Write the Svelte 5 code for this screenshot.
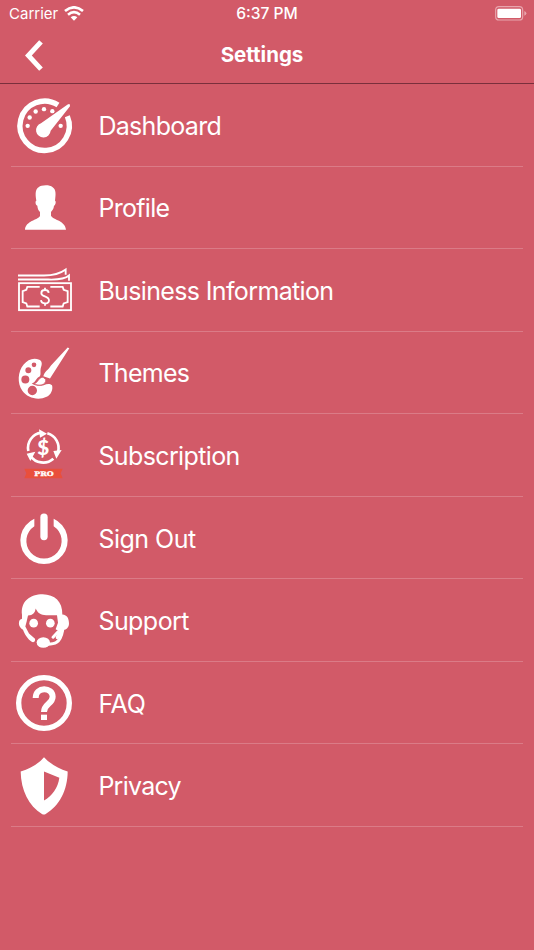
<script lang="ts">
  type Item = { id: string; label: string; top: number; spacing: number };

  // top: vertical start of each icon's viewBox, in icon units (3 per px)
  const items: Item[] = [
    { id: 'dashboard', label: 'Dashboard', top: -16.5, spacing: -0.7 },
    { id: 'profile', label: 'Profile', top: -9, spacing: -0.7 },
    { id: 'business', label: 'Business Information', top: -16.5, spacing: -0.64 },
    { id: 'themes', label: 'Themes', top: -8.5, spacing: -0.7 },
    { id: 'subscription', label: 'Subscription', top: -10, spacing: -0.62 },
    { id: 'signout', label: 'Sign Out', top: -8.5, spacing: -0.5 },
    { id: 'support', label: 'Support', top: -9.5, spacing: -0.55 },
    { id: 'faq', label: 'FAQ', top: -9, spacing: -0.3 },
    { id: 'privacy', label: 'Privacy', top: -9.5, spacing: -0.75 },
  ];
</script>

<div class="screen">
  <header>
    <div class="status">
      <div class="status__left">
        <span class="carrier">Carrier</span>
        <svg class="wifi" viewBox="0 0 60 45" fill="none" stroke="#fff" stroke-width="8">
          <path d="M3 15Q30 -7 57 15" />
          <path d="M12 26Q30 11 48 26" />
          <path d="M30 44L20 34Q30 26 40 34Z" fill="#fff" stroke="none" />
        </svg>
      </div>
      <span class="time">6:37 PM</span>
      <svg class="battery" viewBox="0 0 96 45">
        <rect x="2" y="2" width="81" height="40" rx="10" fill="none" stroke="#e8a5ad" stroke-width="3.5" />
        <rect x="7" y="8" width="71" height="28" rx="4" fill="#fff" />
        <path d="M88 15Q94 17 94 22T88 29Z" fill="#e8a5ad" />
      </svg>
    </div>
    <div class="nav">
      <button class="back" aria-label="Back">
        <svg viewBox="0 0 54 92" fill="none" stroke="#fff" stroke-width="15">
          <path d="M48 5L10 46L48 87" />
        </svg>
      </button>
      <h1>Settings</h1>
    </div>
  </header>

  <ul>
    {#each items as item (item.id)}
      <li>
        <svg class="icon" viewBox={`0 ${item.top} 270 247.65`} fill="#fff">
          {#if item.id === 'dashboard'}
            <path d="M174 43.7A74 74 0 1 0 202 77" fill="none" stroke="#fff" stroke-width="16" />
            <path d="M203 42Q211 38 210 47L152 121A22 22 0 1 1 123 98Z" />
            <circle cx="83" cy="106" r="6.5" />
            <circle cx="89" cy="81" r="6.5" />
            <circle cx="107" cy="63" r="6.5" />
            <circle cx="132" cy="56" r="6.5" />
            <circle cx="157" cy="62" r="6.5" />
            <circle cx="182" cy="106" r="6.5" />
          {:else if item.id === 'profile'}
            <path d="M109 92C105 68 107 57 117 51C121 46 148 42 158 52C168 59 168 71 165 92C169 93 167 106 162 107C161 117 157 121 153 126V137C160 151 195 150 198 179H75C77 152 113 151 120 138V126C115 121 113 116 112 107C106 105 105 93 109 92Z" />
          {:else if item.id === 'business'}
            <g fill="none" stroke="#fff" stroke-width="5.5">
              <rect x="57" y="83" width="156" height="81" />
              <path d="M54 72H145C177 73 196 70 207 60V76" />
              <path d="M54 60H132C164 60 181 54 197 42V58" />
              <path d="M119 94H82L79 103L68 107V140L79 144L82 153H119M151 94H188L191 103L203 107V140L191 144L188 153H151" />
              <path d="M146 112C145 100 124 101 124 113C124 125 147 120 147 135C147 147 124 147 123 134M135 97V104M135 142V151" />
            </g>
          {:else if item.id === 'themes'}
            <path fill-rule="evenodd" d="M118 75C100 67 83 75 71 89C53 110 51 145 67 168C82 190 115 198 140 186C153 180 160 163 156 151C149 145 140 147 131 151C120 155 105 153 95 146C107 144 109 128 118 126C125 119 119 110 123 97C127 88 126 78 118 75ZM102 83A7 7 0 1 0 102 97A7 7 0 1 0 102 83ZM85 97A9 9 0 1 0 85 115A9 9 0 1 0 85 97ZM76 122A12 12 0 1 0 76 146A12 12 0 1 0 76 122ZM97 153A14 14 0 1 0 97 181A14 14 0 1 0 97 153Z" />
            <path d="M203 38L208 40L150 131L130 124C133 111 145 105 153 92Z" />
            <path d="M129 127L137 134C139 151 116 155 102 146C116 144 113 129 129 127Z" stroke="#d25a68" stroke-width="2" />
          {:else if item.id === 'subscription'}
            <g fill="none" stroke="#fff" stroke-width="8">
              <path d="M85 98A46 46 0 0 1 124 43" />
              <path d="M142 45A46 46 0 0 1 174 102" />
              <path d="M160 121A46 46 0 0 1 91 112" />
            </g>
            <path d="M117 33L141 46L120 58ZM160 98L185 95L169 121ZM80 106L106 100L91 128Z" />
            <text class="dollar" x="130" y="110" text-anchor="middle">$</text>
            <path d="M73 151H188L182 165L188 180H73L79 165Z" fill="#e94f3c" />
            <text class="pro" x="132" y="172" text-anchor="middle" textLength="58" lengthAdjust="spacingAndGlyphs">PRO</text>
          {:else if item.id === 'signout'}
            <path d="M103 57A71 71 0 1 0 161 57V79A53 53 0 1 1 103 79Z" />
            <path d="M132 52V110" stroke="#fff" stroke-width="22" stroke-linecap="round" />
          {:else if item.id === 'support'}
            <path d="M66 95C61 54 91 33 128 33C164 34 188 54 187 94C202 95 207 107 207 121C207 134 198 139 191 141C186 154 181 163 173 168Q165 168 168 160L176 144L167 138L174 119L171 96H142C124 97 114 91 107 76C105 89 99 96 84 97L80 115L76 130L87 151L105 167C107 175 101 180 94 175C84 169 74 154 69 140C56 133 54 118 60 110L66 107Z" />
            <circle cx="101" cy="120" r="13" />
            <circle cx="151" cy="120" r="13" />
            <ellipse cx="130" cy="178" rx="20" ry="16" />
            <path d="M138 183C163 184 181 181 188 141M159 162L173 147" fill="none" stroke="#fff" stroke-width="9" stroke-linecap="round" />
          {:else if item.id === 'faq'}
            <circle cx="132" cy="114" r="76" fill="none" stroke="#fff" stroke-width="16" />
            <path d="M107 99C107 63 158 66 158 95C158 117 132 116 132 141" fill="none" stroke="#fff" stroke-width="18" />
            <path d="M123 149H141V165H123Z" />
          {:else}
            <path fill-rule="evenodd" d="M132 27C151 47 175 61 203 70C203 125 178 174 136 198Q132 200 127 198C86 174 63 126 62 70C91 61 114 48 132 27ZM132 70V157C156 145 174 119 178 89Z" />
          {/if}
        </svg>
        <span class="label" style="letter-spacing: {item.spacing}px">{item.label}</span>
      </li>
    {/each}
  </ul>
</div>

<style>
  :global(body) {
    margin: 0;
    background: #d25a68;
  }

  .screen {
    width: 534px;
    height: 950px;
    overflow: hidden;
    background: #d25a68;
    color: #fff;
    font-family: Inter, 'Liberation Sans', sans-serif;
  }

  header {
    box-sizing: border-box;
    height: 84px;
    border-bottom: 1px solid #792f3c;
  }

  .status {
    box-sizing: border-box;
    display: grid;
    grid-template-columns: 1fr auto 1fr;
    align-items: center;
    height: 27px;
    padding: 0 7px 0 9px;
  }

  .status__left {
    display: flex;
    align-items: center;
    gap: 6px;
  }

  .carrier {
    font-size: 15px;
  }

  .wifi {
    width: 20px;
    height: 15px;
  }

  .time {
    margin-right: 2px;
    font-weight: 500;
    font-size: 15.6px;
  }

  .battery {
    justify-self: end;
    width: 32px;
    height: 15px;
  }

  .nav {
    display: grid;
    grid-template-columns: 80px 1fr 90px;
    align-items: center;
    height: 56px;
  }

  .back {
    display: flex;
    padding: 0 0 0 25px;
    border: 0;
    background: none;
  }

  .back svg {
    width: 18px;
    height: 31px;
  }

  h1 {
    margin: 0;
    padding-bottom: 2px;
    font-size: 20.5px;
    font-weight: 700;
    text-align: center;
  }

  ul {
    margin: 0;
    padding: 0.5px 0 0;
    list-style: none;
  }

  li {
    display: flex;
    align-items: center;
    height: 82.55px;
    background: linear-gradient(#db7b87, #db7b87) 11px 100% / 512px 1.4px no-repeat;
  }

  .icon {
    flex: none;
    width: 90px;
    height: 82.55px;
  }

  .label {
    padding-left: 8.4px;
    font-size: 25px;
    white-space: nowrap;
  }

  .dollar {
    font: 900 62px Lato, sans-serif;
  }

  .pro {
    font: 700 19px 'DejaVu Serif', serif;
    stroke: #fff;
    stroke-width: 1px;
  }
</style>
